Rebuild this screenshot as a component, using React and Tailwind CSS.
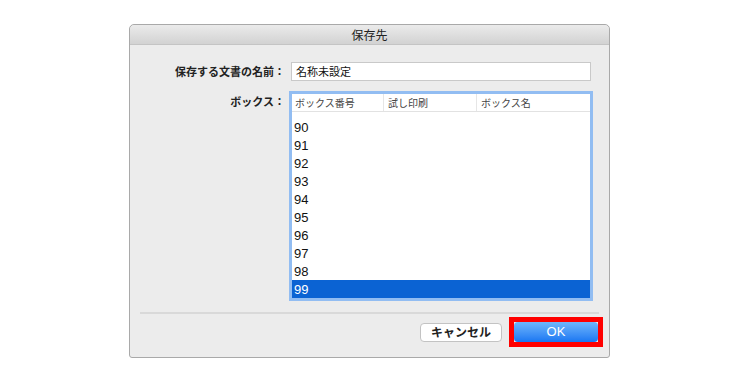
import React from 'react';

const jp = { fontFamily: '"Hiragino Sans", "Noto Sans CJK JP", sans-serif' };
const num = { fontFamily: '"Liberation Sans", Arial, sans-serif' };

const boxes = ['90', '91', '92', '93', '94', '95', '96', '97', '98', '99'];

const BoxTable = ({ selected }) => (
    <div className="w-[304px] h-[210px] border-[3px] border-[#92bdf2] bg-white flex flex-col">
        <div className="h-[18px] flex border-b border-[#e2e2e2] text-[10px] text-[#444]" style={jp}>
            <div className="w-[92px] pl-[3px] flex items-center border-r border-[#e6e6e6]">ボックス番号</div>
            <div className="w-[93px] pl-[4px] flex items-center border-r border-[#e6e6e6]">試し印刷</div>
            <div className="flex-1 pl-[4px] flex items-center">ボックス名</div>
        </div>
        <div className="pt-[6px] flex flex-col">
            {boxes.map((b) => (
                <div
                    key={b}
                    className={
                        b === selected
                            ? 'h-[18px] pl-[2px] pt-[1px] flex items-center text-[13px] bg-[#0b63d3] text-white'
                            : 'h-[18px] pl-[2px] pt-[1px] flex items-center text-[13px] text-[#111]'
                    }
                    style={num}
                >
                    {b}
                </div>
            ))}
        </div>
    </div>
);

export default function App() {
    return (
        <div className="w-[740px] h-[379px] bg-white pt-[24px] pl-[129px]">
            <div className="w-[481px] h-[334px] bg-[#ececec] border border-[#a9a9a9] rounded-t-[5px] rounded-b-[3px] flex flex-col">
                <div
                    className="h-[20px] rounded-t-[5px] border-b border-[#c4c4c4] bg-gradient-to-b from-[#ebebeb] to-[#d2d2d2] flex items-center justify-center text-[12px] text-[#222]"
                    style={jp}
                >
                    保存先
                </div>

                <div className="flex items-center mt-[17px]">
                    <div className="w-[155px] text-right text-[11px] font-bold text-[#222]" style={jp}>
                        保存する文書の名前：
                    </div>
                    <div
                        className="ml-[6px] w-[300px] h-[19px] bg-white border border-[#c9c9c9] pl-[4px] flex items-center text-[11px] text-[#111]"
                        style={jp}
                    >
                        名称未設定
                    </div>
                </div>

                <div className="flex mt-[10px]">
                    <div className="w-[155px] pt-[2px] text-right text-[11px] font-bold text-[#222]" style={jp}>
                        ボックス：
                    </div>
                    <div className="ml-[4px]">
                        <BoxTable selected="99" />
                    </div>
                </div>

                <div className="mx-[10px] mt-[11px] h-[2px] bg-[#d9d9d9]" />

                <div className="flex justify-end items-center mt-[3px] pr-[6px]">
                    <button
                        className="w-[82px] h-[19px] rounded-[4px] bg-white border border-[#c3c3c3] text-[12px] font-bold text-[#222] flex items-center justify-center"
                        style={jp}
                    >
                        キャンセル
                    </button>
                    <div className="ml-[7px] border-[5px] border-[#ff0000]">
                        <button
                            className="w-[84px] h-[20px] rounded-[4px] bg-gradient-to-b from-[#6fb6fb] to-[#1776f2] text-white text-[13px] flex items-center justify-center"
                            style={num}
                        >
                            OK
                        </button>
                    </div>
                </div>
            </div>
        </div>
    );
}
